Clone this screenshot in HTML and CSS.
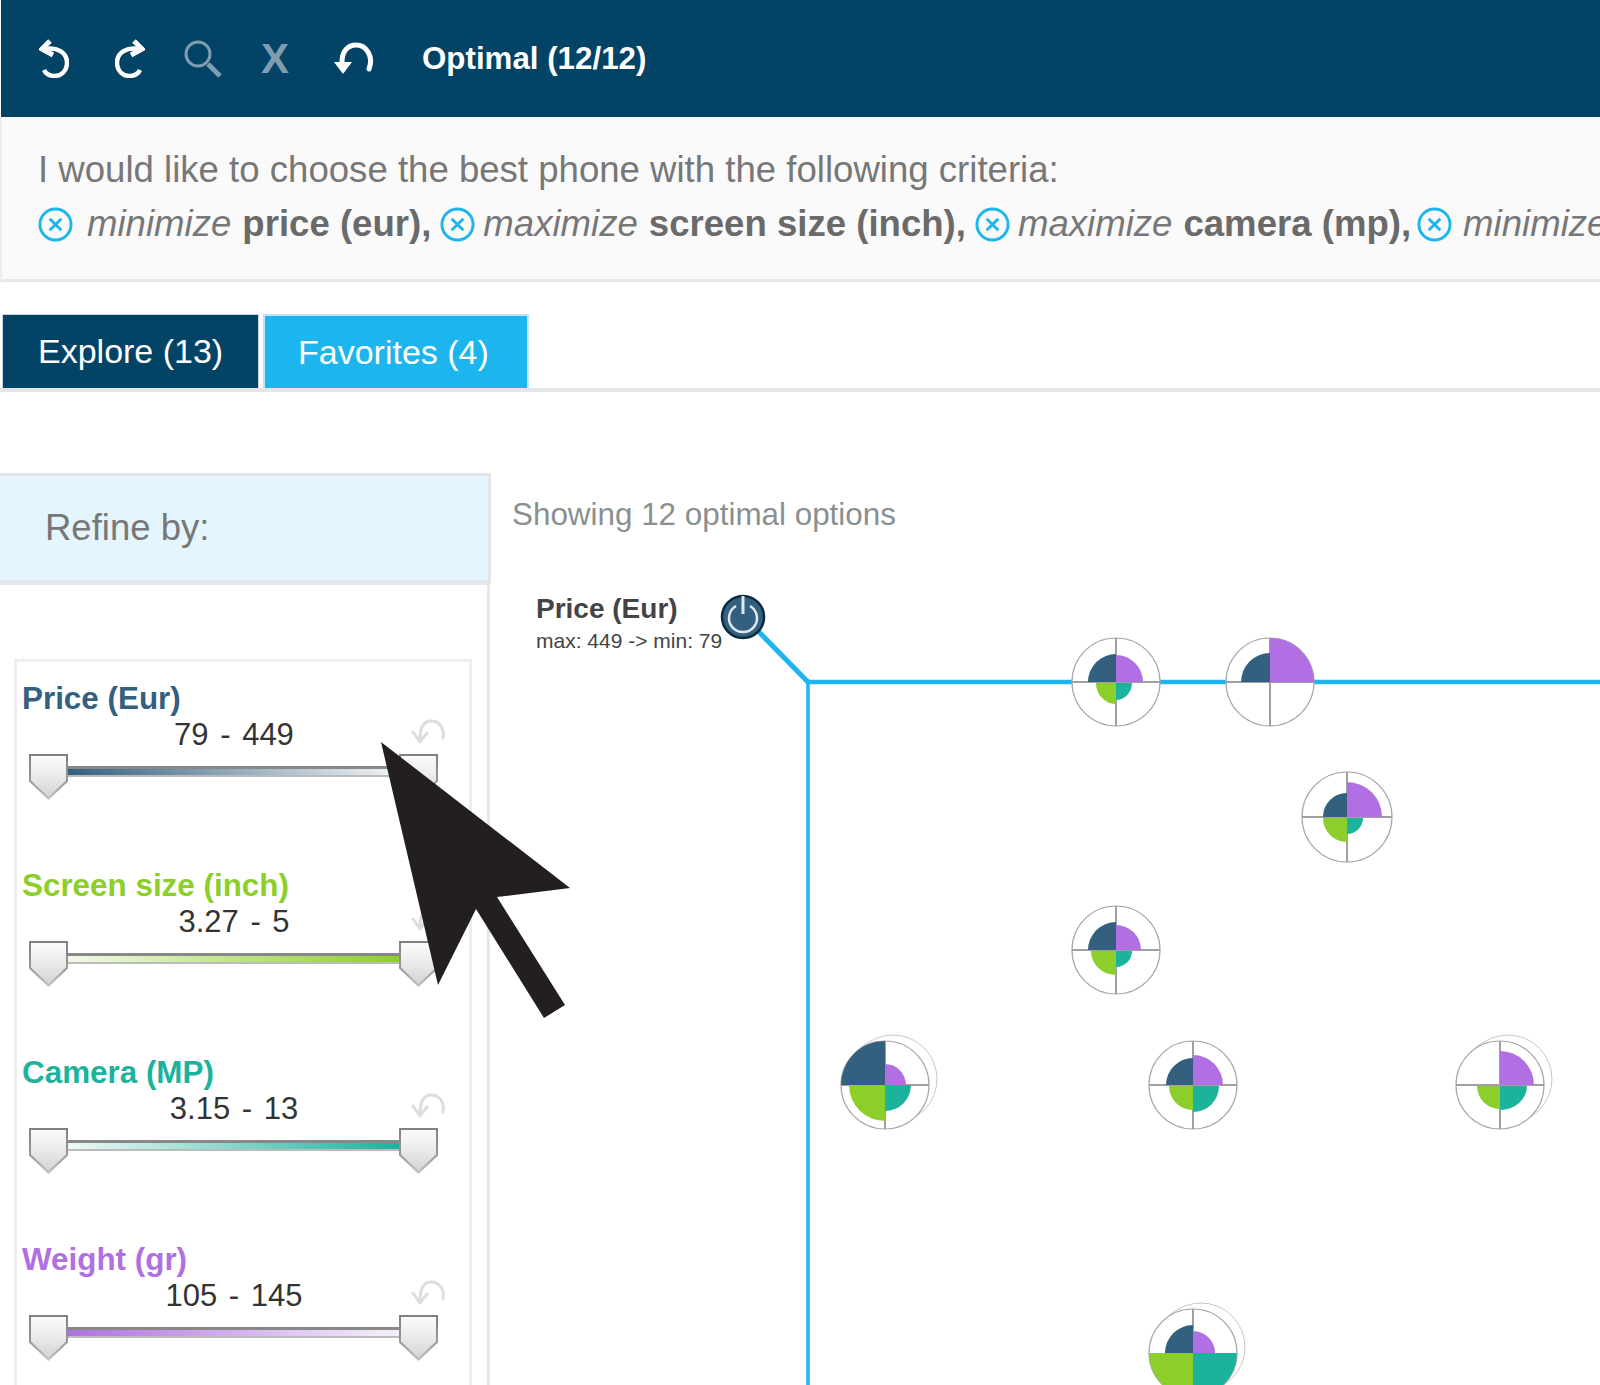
FILE: index.html
```html
<!DOCTYPE html>
<html lang="en">
<head>
    <meta charset="UTF-8">
    <title>Phone decision tool</title>
    <link rel="stylesheet" href="styles.css">
</head>
<body>
    <svg width="0" height="0" class="defs">
        <defs>
            <path id="reset-arrow" d="M32 20 C34 10 28 3 20 3 C13 3 9 8 9 22 M2 14 L9 24 L16 15" fill="none" stroke-linecap="round" stroke-linejoin="round"/>
        </defs>
    </svg>

    <header class="toolbar">
        <svg class="tool tool-undo" viewBox="0 0 30 39"><path d="M6 10 C18 8 28 13 28 24 C28 32 22 37 16 37 C11 37 7 35 5 31" fill="none" stroke="#fff" stroke-width="4.5"/><path d="M11 2 L3 10 L14 16" fill="none" stroke="#fff" stroke-width="5"/></svg>
        <svg class="tool tool-redo" viewBox="0 0 30 39"><path d="M24 10 C12 8 2 13 2 24 C2 32 8 37 14 37 C19 37 23 35 25 31" fill="none" stroke="#fff" stroke-width="4.5"/><path d="M19 2 L27 10 L16 16" fill="none" stroke="#fff" stroke-width="5"/></svg>
        <svg class="tool tool-search" viewBox="0 0 38 38"><circle cx="14" cy="14" r="12" fill="none" stroke="#7f9db0" stroke-width="3"/><path d="M24 24 L36 36" stroke="#7f9db0" stroke-width="5"/></svg>
        <span class="tool-clear">X</span>
        <svg class="tool tool-reset" viewBox="0 0 41 34"><path d="M36 27 C41 14 33 3 23 3 C15 3 9 9 9 20" fill="none" stroke="#fff" stroke-width="5" stroke-linecap="round"/><path d="M1 20 L19 20 L10 32 Z" fill="#fff"/></svg>
        <span class="status">Optimal (12/12)</span>
    </header>

    <section class="query">
        <p class="query-intro">I would like to choose the best phone with the following criteria:</p>
        <div class="criteria">
            <span class="criterion criterion-first"><svg class="remove" viewBox="0 0 36 36"><circle cx="18" cy="18" r="16" fill="none" stroke="#1cb5ee" stroke-width="3"/><path d="M12 12 L24 24 M24 12 L12 24" stroke="#1cb5ee" stroke-width="3"/></svg><em>minimize</em> <b>price (eur),</b></span>
            <span class="criterion"><svg class="remove" viewBox="0 0 36 36"><circle cx="18" cy="18" r="16" fill="none" stroke="#1cb5ee" stroke-width="3"/><path d="M12 12 L24 24 M24 12 L12 24" stroke="#1cb5ee" stroke-width="3"/></svg><em>maximize</em> <b>screen size (inch),</b></span>
            <span class="criterion"><svg class="remove" viewBox="0 0 36 36"><circle cx="18" cy="18" r="16" fill="none" stroke="#1cb5ee" stroke-width="3"/><path d="M12 12 L24 24 M24 12 L12 24" stroke="#1cb5ee" stroke-width="3"/></svg><em>maximize</em> <b>camera (mp),</b></span>
            <span class="criterion criterion-last"><svg class="remove" viewBox="0 0 36 36"><circle cx="18" cy="18" r="16" fill="none" stroke="#1cb5ee" stroke-width="3"/><path d="M12 12 L24 24 M24 12 L12 24" stroke="#1cb5ee" stroke-width="3"/></svg><em>minimize</em></span>
        </div>
    </section>

    <nav class="tabs">
        <a href="#" class="tab tab-explore">Explore (13)</a>
        <a href="#" class="tab tab-favorites">Favorites (4)</a>
    </nav>

    <main class="content">
        <aside class="sidebar">
            <div class="refine">Refine by:</div>
            <div class="filters-wrap">
                <div class="filters">
                    <div class="filter filter-price">
                        <h3>Price (Eur)</h3>
                        <div class="range">79 - 449</div>
                        <svg class="reset" viewBox="0 0 34 26"><use href="#reset-arrow"/></svg>
                        <div class="slider"><span class="handle"></span><span class="track"></span><span class="handle"></span></div>
                    </div>
                    <div class="filter filter-screen">
                        <h3>Screen size (inch)</h3>
                        <div class="range">3.27 - 5</div>
                        <svg class="reset" viewBox="0 0 34 26"><use href="#reset-arrow"/></svg>
                        <div class="slider"><span class="handle"></span><span class="track"></span><span class="handle"></span></div>
                    </div>
                    <div class="filter filter-camera">
                        <h3>Camera (MP)</h3>
                        <div class="range">3.15 - 13</div>
                        <svg class="reset" viewBox="0 0 34 26"><use href="#reset-arrow"/></svg>
                        <div class="slider"><span class="handle"></span><span class="track"></span><span class="handle"></span></div>
                    </div>
                    <div class="filter filter-weight">
                        <h3>Weight (gr)</h3>
                        <div class="range">105 - 145</div>
                        <svg class="reset" viewBox="0 0 34 26"><use href="#reset-arrow"/></svg>
                        <div class="slider"><span class="handle"></span><span class="track"></span><span class="handle"></span></div>
                    </div>
                </div>
            </div>
        </aside>

        <section class="chart">
            <p class="showing">Showing 12 optimal options</p>
            <div class="axis-label">
                <strong>Price (Eur)</strong>
                <small>max: 449 -&gt; min: 79</small>
            </div>
            <!-- plot coordinates are page coordinates, the viewBox starts at the chart origin -->
            <svg class="plot" viewBox="491 473 1109 912">
                <path class="axis axis-diag" d="M757 630 L808 682"/>
                <path class="axis axis-v" d="M808 680 V1385"/>
                <path class="axis" d="M806 682 H1600"/>

                <g transform="translate(743 617)">
                    <circle r="21" fill="#34607f" stroke="#0c2a3e" stroke-width="2.5"/>
                    <path d="M-7 -11 A14 14 0 1 0 7 -11" fill="none" stroke="#dfe8ee" stroke-width="2.5"/>
                    <path d="M0 -21 V-3" stroke="#dfe8ee" stroke-width="3"/>
                </g>

                <g transform="translate(1116 682)">
                    <circle class="ring" r="44"/>
                    <path class="cross" d="M-44 0 H44 M0 -44 V44"/>
                    <path class="w-price" d="M0 0 V-28 A28 28 0 0 0 -28 0 Z"/>
                    <path class="w-weight" d="M0 0 V-27 A27 27 0 0 1 27 0 Z"/>
                    <path class="w-screen" d="M0 1 H-20 A20 21 0 0 0 0 22 Z"/>
                    <path class="w-camera" d="M0 1 H16 A16 17 0 0 1 0 18 Z"/>
                </g>
                <g transform="translate(1270 682)">
                    <circle class="ring" r="44"/>
                    <path class="cross" d="M-44 0 H44 M0 -44 V44"/>
                    <path class="w-price" d="M0 0 V-29 A29 29 0 0 0 -29 0 Z"/>
                    <path class="w-weight" d="M0 0 V-44 A44 44 0 0 1 44 0 Z"/>
                </g>
                <g transform="translate(1347 817)">
                    <circle class="ring" r="45"/>
                    <path class="cross" d="M-45 0 H45 M0 -45 V45"/>
                    <path class="w-price" d="M0 0 V-24 A24 24 0 0 0 -24 0 Z"/>
                    <path class="w-weight" d="M0 0 V-35 A35 35 0 0 1 35 0 Z"/>
                    <path class="w-screen" d="M0 1 H-24 A24 24 0 0 0 0 25 Z"/>
                    <path class="w-camera" d="M0 1 H16 A16 16 0 0 1 0 17 Z"/>
                </g>
                <g transform="translate(1116 950)">
                    <circle class="ring" r="44"/>
                    <path class="cross" d="M-44 0 H44 M0 -44 V44"/>
                    <path class="w-price" d="M0 0 V-28 A28 28 0 0 0 -28 0 Z"/>
                    <path class="w-weight" d="M0 0 V-25 A25 25 0 0 1 25 0 Z"/>
                    <path class="w-screen" d="M0 1 H-25 A25 24 0 0 0 0 25 Z"/>
                    <path class="w-camera" d="M0 1 H16 A16 16 0 0 1 0 17 Z"/>
                </g>
                <g transform="translate(885 1085)">
                    <circle class="ghost" cx="3" cy="-3" r="44"/>
                    <circle class="ghost" cx="6" cy="-5" r="44"/>
                    <circle class="ghost" cx="8" cy="-6" r="44"/>
                    <circle class="ring" r="44"/>
                    <path class="cross" d="M-44 0 H44 M0 -44 V44"/>
                    <path class="w-price" d="M0 0 V-44 A44 44 0 0 0 -44 0 Z"/>
                    <path class="w-weight" d="M0 0 V-21 A21 21 0 0 1 21 0 Z"/>
                    <path class="w-screen" d="M0 0 H-36 A36 36 0 0 0 0 36 Z"/>
                    <path class="w-camera" d="M0 0 H26 A26 26 0 0 1 0 26 Z"/>
                </g>
                <g transform="translate(1193 1085)">
                    <circle class="ring" r="44"/>
                    <path class="cross" d="M-44 0 H44 M0 -44 V44"/>
                    <path class="w-price" d="M0 0 V-27 A27 27 0 0 0 -27 0 Z"/>
                    <path class="w-weight" d="M0 0 V-30 A30 30 0 0 1 30 0 Z"/>
                    <path class="w-screen" d="M0 1 H-24 A24 24 0 0 0 0 25 Z"/>
                    <path class="w-camera" d="M0 1 H26 A26 26 0 0 1 0 27 Z"/>
                </g>
                <g transform="translate(1500 1085)">
                    <circle class="ghost" cx="3" cy="-3" r="44"/>
                    <circle class="ghost" cx="6" cy="-5" r="44"/>
                    <circle class="ghost" cx="8" cy="-6" r="44"/>
                    <circle class="ring" r="44"/>
                    <path class="cross" d="M-44 0 H44 M0 -44 V44"/>
                    <path class="w-weight" d="M0 0 V-34 A34 34 0 0 1 34 0 Z"/>
                    <path class="w-screen" d="M0 1 H-23 A23 23 0 0 0 0 24 Z"/>
                    <path class="w-camera" d="M0 1 H27 A27 24 0 0 1 0 25 Z"/>
                </g>
                <g transform="translate(1193 1353)">
                    <circle class="ghost" cx="3" cy="-3" r="44"/>
                    <circle class="ghost" cx="6" cy="-5" r="44"/>
                    <circle class="ghost" cx="8" cy="-6" r="44"/>
                    <circle class="ring" r="44"/>
                    <path class="cross" d="M0 -44 V44"/>
                    <path class="w-price" d="M0 0 V-28 A28 28 0 0 0 -28 0 Z"/>
                    <path class="w-weight" d="M0 0 V-22 A22 22 0 0 1 22 0 Z"/>
                    <path class="w-screen" d="M0 0 H-44 A44 44 0 0 0 0 44 Z"/>
                    <path class="w-camera" d="M0 0 H44 A44 44 0 0 1 0 44 Z"/>
                </g>
            </svg>
        </section>
    </main>

    <svg class="pointer" viewBox="0 0 1600 1385">
        <path d="M381 742 L570 888 L497 897 L565 1005 L544 1018 L476 909 L438 985 Z" fill="#231f20"/>
    </svg>
</body>
</html>
```

FILE: styles.css
```css
* {
    margin: 0;
    padding: 0;
    box-sizing: border-box;
    font-family: 'Liberation Sans', Arial, sans-serif;
}

body {
    position: relative;
    width: 1600px;
    height: 1385px;
    overflow: hidden;
    background: #fff;
}

.defs {
    position: absolute;
}

/* top bar */
.toolbar {
    display: flex;
    align-items: center;
    height: 117px;
    margin-left: 1px;
    padding-left: 38px;
    background: #034366;
}

.tool {
    display: block;
    flex: none;
}

.tool-undo {
    width: 30px;
    height: 39px;
}

.tool-redo {
    width: 30px;
    height: 39px;
    margin-left: 46px;
}

.tool-search {
    width: 38px;
    height: 38px;
    margin-left: 39px;
}

.tool-clear {
    width: 32px;
    margin-left: 39px;
    color: #7f9db0;
    font-size: 42px;
    font-weight: bold;
}

.tool-reset {
    width: 41px;
    height: 34px;
    margin-left: 40px;
}

.status {
    margin-left: 48px;
    color: #fff;
    font-size: 31.3px;
    font-weight: bold;
}

/* query sentence */
.query {
    height: 165px;
    padding: 33px 0 0 36px;
    overflow: hidden;
    background: #fafafa;
    border-left: 2px solid #eee;
    border-bottom: 3px solid #e8e8e8;
    color: #777;
    font-size: 36.6px;
    white-space: nowrap;
}

.query-intro {
    line-height: 40px;
}

.criteria {
    display: flex;
    gap: 9px;
    margin-top: 13px;
}

.criterion {
    display: flex;
    align-items: center;
    gap: 11px;
    flex: none;
}

.criterion b {
    color: #6a6a6a;
}

.remove {
    width: 35px;
    height: 35px;
    margin-right: -3px;
}

.criterion-first .remove {
    margin-right: 3px;
}

.criterion-last {
    margin-left: -3px;
}

.criterion-last .remove {
    margin-right: 0;
}

/* tabs */
.tabs {
    display: flex;
    gap: 4px;
    height: 78px;
    margin-top: 32px;
    padding-left: 2px;
    border-bottom: 4px solid #e3e6e8;
}

.tab {
    display: flex;
    align-items: center;
    height: 74px;
    color: #fff;
    font-size: 34px;
    text-decoration: none;
    border: 1px solid #c8d4db;
    border-bottom: none;
}

.tab-explore {
    width: 257px;
    padding-left: 35px;
    background: #034366;
}

.tab-favorites {
    width: 266px;
    padding-left: 33px;
    background: #1cb5ee;
    border-width: 2px;
    border-color: #bfe4f5;
}

/* content */
.content {
    display: flex;
    height: 912px;
    margin-top: 81px;
}

.sidebar {
    width: 491px;
    flex: none;
}

.refine {
    height: 110px;
    padding: 31px 0 0 45px;
    background: #e5f5fd;
    border: 3px solid #e3e6e8;
    border-left: none;
    color: #777;
    font-size: 36.5px;
}

.filters-wrap {
    width: 490px;
    height: 802px;
    padding-top: 74px;
    border-top: 2px solid #e8e8e8;
    border-right: 3px solid #e8e8e8;
}

.filters {
    height: 726px;
    margin: 0 15px 0 14px;
    padding-top: 18px;
    border: 3px solid #eee;
    border-bottom: none;
}

.filter {
    position: relative;
    height: 187px;
    padding-left: 5px;
}

.filter h3 {
    font-size: 31.4px;
    line-height: 37px;
}

.filter-price h3 { color: #34607f; }
.filter-screen h3 { color: #8ccf2b; }
.filter-camera h3 { color: #1cb39c; }
.filter-weight h3 { color: #b070e3; }

.range {
    width: 424px;
    color: #333;
    font-size: 31px;
    line-height: 36px;
    text-align: center;
    word-spacing: 3px;
}

.reset {
    position: absolute;
    right: 24px;
    top: 38px;
    width: 34px;
    height: 26px;
    stroke: #ddd;
    stroke-width: 3;
}

.slider {
    display: flex;
    align-items: flex-start;
    margin: 1px 0 0 7px;
}

.handle {
    position: relative;
    flex: none;
    width: 39px;
    height: 46px;
    background: linear-gradient(#808080, #9a9a9a 60%, #c4c4c4);
    clip-path: polygon(0 0, 100% 0, 100% 60%, 50% 100%, 0 60%);
}

.handle::before {
    content: "";
    position: absolute;
    left: 2px;
    right: 2px;
    top: 2px;
    bottom: 3px;
    background: linear-gradient(#fafafa, #f2f2f2 30%, #d4d4d4);
    clip-path: polygon(0 0, 100% 0, 100% 60%, 50% 100%, 0 60%);
}

.track {
    flex: none;
    width: 331px;
    height: 11px;
    margin-top: 12px;
    border-top: 3px solid #888;
    border-bottom: 2px solid #bbb;
}

.filter-price .track { background: linear-gradient(to right, #34607f, #f2f5f7); }
.filter-screen .track { background: linear-gradient(to right, #f2f9e8, #8ccf2b); }
.filter-camera .track { background: linear-gradient(to right, #eef9f7, #1cb39c); }
.filter-weight .track { background: linear-gradient(to right, #b070e3, #f6f0fb); }

/* chart */
.chart {
    position: relative;
    flex: 1;
    padding: 24px 0 0 21px;
}

.showing {
    color: #8a8f8f;
    font-size: 31.4px;
    line-height: 36px;
}

.axis-label {
    margin: 59px 0 0 24px;
    color: #444;
}

.axis-label strong {
    display: block;
    font-size: 28px;
    line-height: 34px;
}

.axis-label small {
    display: block;
    margin-top: 3px;
    font-size: 21px;
    line-height: 24px;
}

.plot {
    position: absolute;
    left: 0;
    top: 0;
    width: 1109px;
    height: 912px;
}

.axis {
    fill: none;
    stroke: #1cb5ee;
    stroke-width: 4.5;
}

.axis-v {
    stroke-width: 3.5;
}

.axis-diag {
    stroke-width: 5;
}

.ring {
    fill: #fff;
    stroke: #a8a8a8;
    stroke-width: 1.2;
}

.ghost {
    fill: #fff;
    stroke: #c8c8c8;
    stroke-width: 1;
}

.cross {
    fill: none;
    stroke: #a0a0a0;
    stroke-width: 2;
}

.w-price { fill: #34607f; }
.w-screen { fill: #8ccf2b; }
.w-camera { fill: #1cb39c; }
.w-weight { fill: #b070e3; }

/* big cursor drawn over the whole picture */
.pointer {
    position: absolute;
    left: 0;
    top: 0;
    width: 1600px;
    height: 1385px;
    pointer-events: none;
}
```
